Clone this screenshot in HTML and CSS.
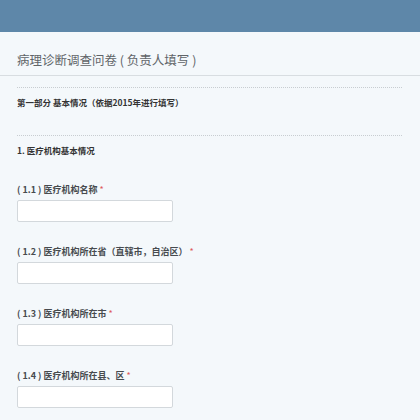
FILE: index.html
```html
<!DOCTYPE html>
<html lang="zh-CN">
<head>
<meta charset="utf-8">
<link rel="stylesheet" href="styles.css">
</head>
<body>
<div class="topbar"></div>
<div class="title-bar"><h1 class="title">病理诊断调查问卷 ( 负责人填写 )</h1></div>
<div class="content">
  <div class="section">第一部分 基本情况（依据2015年进行填写）</div>
  <div class="group">
    <div class="group-title">1. 医疗机构基本情况</div>
    <div class="fields">
      <div class="field">
        <div class="label">( 1.1 ) 医疗机构名称 <span class="req">*</span></div>
        <div class="input"></div>
      </div>
      <div class="field">
        <div class="label">( 1.2 ) 医疗机构所在省（直辖市，自治区） <span class="req">*</span></div>
        <div class="input"></div>
      </div>
      <div class="field">
        <div class="label">( 1.3 ) 医疗机构所在市 <span class="req">*</span></div>
        <div class="input"></div>
      </div>
      <div class="field">
        <div class="label">( 1.4 ) 医疗机构所在县、区 <span class="req">*</span></div>
        <div class="input"></div>
      </div>
    </div>
  </div>
</div>
</body>
</html>
```
FILE: styles.css
```css
html, body {
  margin: 0;
  padding: 0;
  background: #f4f8fb;
  font-family: "Noto Sans CJK SC", "Noto Sans", sans-serif;
}
.topbar {
  height: 32px;
  background: #5e87a9;
}
.title-bar {
  padding: 20px 17px 7px;
  border-bottom: 1px solid #d8dde1;
}
.title {
  margin: 0;
  font-size: 12.5px;
  line-height: 16px;
  font-weight: normal;
  color: #606468;
}
.content {
  padding: 11px 18px 0 17px;
}
.section {
  border-top: 1px dotted #c8cdd1;
  padding-top: 8px;
  height: 48px;
  box-sizing: border-box;
  font-size: 8.5px;
  line-height: 12px;
  font-weight: bold;
  color: #333;
}
.group {
  border-top: 1px dotted #c8cdd1;
  padding-top: 8px;
}
.group-title {
  font-size: 8.5px;
  line-height: 12px;
  font-weight: bold;
  color: #333;
  margin-bottom: 28px;
}
.fields {
  display: flex;
  flex-direction: column;
  gap: 24px;
}
.field {
  display: flex;
  flex-direction: column;
  gap: 4px;
}
.label {
  font-size: 9px;
  line-height: 12px;
  font-weight: bold;
  color: #474b4f;
}
.req {
  color: #de5a5a;
  font-weight: normal;
}
.input {
  width: 156px;
  height: 22px;
  box-sizing: border-box;
  background: #fff;
  border: 1px solid #d3d8dc;
  border-radius: 2px;
}
```
